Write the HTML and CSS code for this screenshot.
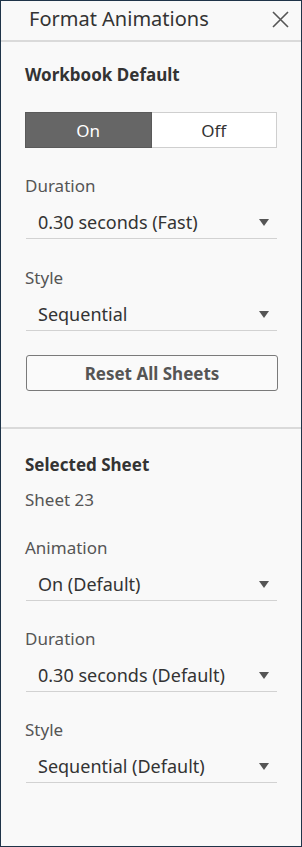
FILE: index.html
```html
<!DOCTYPE html>
<html>
<head>
    <title>Format Animations</title>
    <link rel="stylesheet" href="styles.css">
</head>
<body>
    <div class="panel">
        <div class="header">
            <h1 class="title">Format Animations</h1>
            <svg class="close-icon" width="17" height="17" viewBox="0 0 17 17">
                <path d="M1 1 L16 16 M16 1 L1 16" stroke="#555" stroke-width="1.6" fill="none"/>
            </svg>
        </div>

        <div class="section">
            <h2 class="section-title">Workbook Default</h2>
            <div class="toggle">
                <div class="toggle-option active">On</div>
                <div class="toggle-option">Off</div>
            </div>

            <div class="field first">
                <div class="field-label">Duration</div>
                <div class="select">
                    <span class="select-value">0.30 seconds (Fast)</span>
                    <span class="arrow"></span>
                </div>
            </div>

            <div class="field">
                <div class="field-label">Style</div>
                <div class="select">
                    <span class="select-value">Sequential</span>
                    <span class="arrow"></span>
                </div>
            </div>

            <button class="reset-button">Reset All Sheets</button>
        </div>

        <div class="section sheet-section">
            <h2 class="section-title">Selected Sheet</h2>
            <div class="sheet-name">Sheet 23</div>

            <div class="field">
                <div class="field-label">Animation</div>
                <div class="select">
                    <span class="select-value">On (Default)</span>
                    <span class="arrow"></span>
                </div>
            </div>

            <div class="field">
                <div class="field-label">Duration</div>
                <div class="select">
                    <span class="select-value">0.30 seconds (Default)</span>
                    <span class="arrow"></span>
                </div>
            </div>

            <div class="field">
                <div class="field-label">Style</div>
                <div class="select">
                    <span class="select-value">Sequential (Default)</span>
                    <span class="arrow"></span>
                </div>
            </div>
        </div>
    </div>
</body>
</html>
```

FILE: styles.css
```css
* {
    margin: 0;
    padding: 0;
    box-sizing: border-box;
    font-family: "Noto Sans", Arial, sans-serif;
}

body {
    background-color: #f9f9f9;
}

.panel {
    width: 302px;
    height: 847px;
    border: 1px solid #1f3449;
    background-color: #f9f9f9;
}

.header {
    display: flex;
    justify-content: space-between;
    align-items: flex-start;
    height: 41px;
    padding: 6px 12px 0 28px;
    border-bottom: 2px solid #dadada;
}

.title {
    font-size: 20px;
    font-weight: normal;
    line-height: 24px;
    color: #333333;
}

.close-icon {
    margin-top: 4px;
}

.section {
    padding: 23px 24px 36px 24px;
    border-bottom: 2px solid #dadada;
}

.sheet-section {
    padding-top: 26px;
    border-bottom: none;
}

.section-title {
    font-size: 17px;
    font-weight: bold;
    line-height: 20px;
    color: #333333;
}

.toggle {
    display: flex;
    margin-top: 27px;
    height: 36px;
}

.toggle-option {
    flex: 1;
    display: flex;
    justify-content: center;
    align-items: center;
    font-size: 17px;
    color: #333333;
    background-color: #ffffff;
    border: 1px solid #cfcfcf;
    border-left: none;
}

.toggle-option.active {
    background-color: #666666;
    border: 1px solid #5a5a5a;
    color: #ffffff;
}

.field {
    margin-top: 29px;
}

.field.first {
    margin-top: 28px;
}

.sheet-section .field {
    margin-top: 28px;
}

.field-label {
    font-size: 17px;
    line-height: 20px;
    color: #555555;
}

.select {
    display: flex;
    justify-content: space-between;
    align-items: center;
    padding: 16px 8px 6px 12px;
    margin-left: 1px;
    border-bottom: 1px solid #d2d2d2;
}

.select-value {
    font-size: 18px;
    line-height: 20px;
    color: #333333;
}

.arrow {
    width: 0;
    height: 0;
    border-left: 5.5px solid transparent;
    border-right: 5.5px solid transparent;
    border-top: 7px solid #555555;
}

.reset-button {
    display: block;
    width: 100%;
    height: 36px;
    margin-top: 24px;
    margin-left: 1px;
    border: 1px solid #7a7a7a;
    border-radius: 3px;
    background-color: #fafafa;
    font-size: 17px;
    font-weight: bold;
    color: #555555;
    cursor: pointer;
}

.sheet-name {
    margin-top: 15px;
    font-size: 17px;
    line-height: 20px;
    color: #555555;
}
```
